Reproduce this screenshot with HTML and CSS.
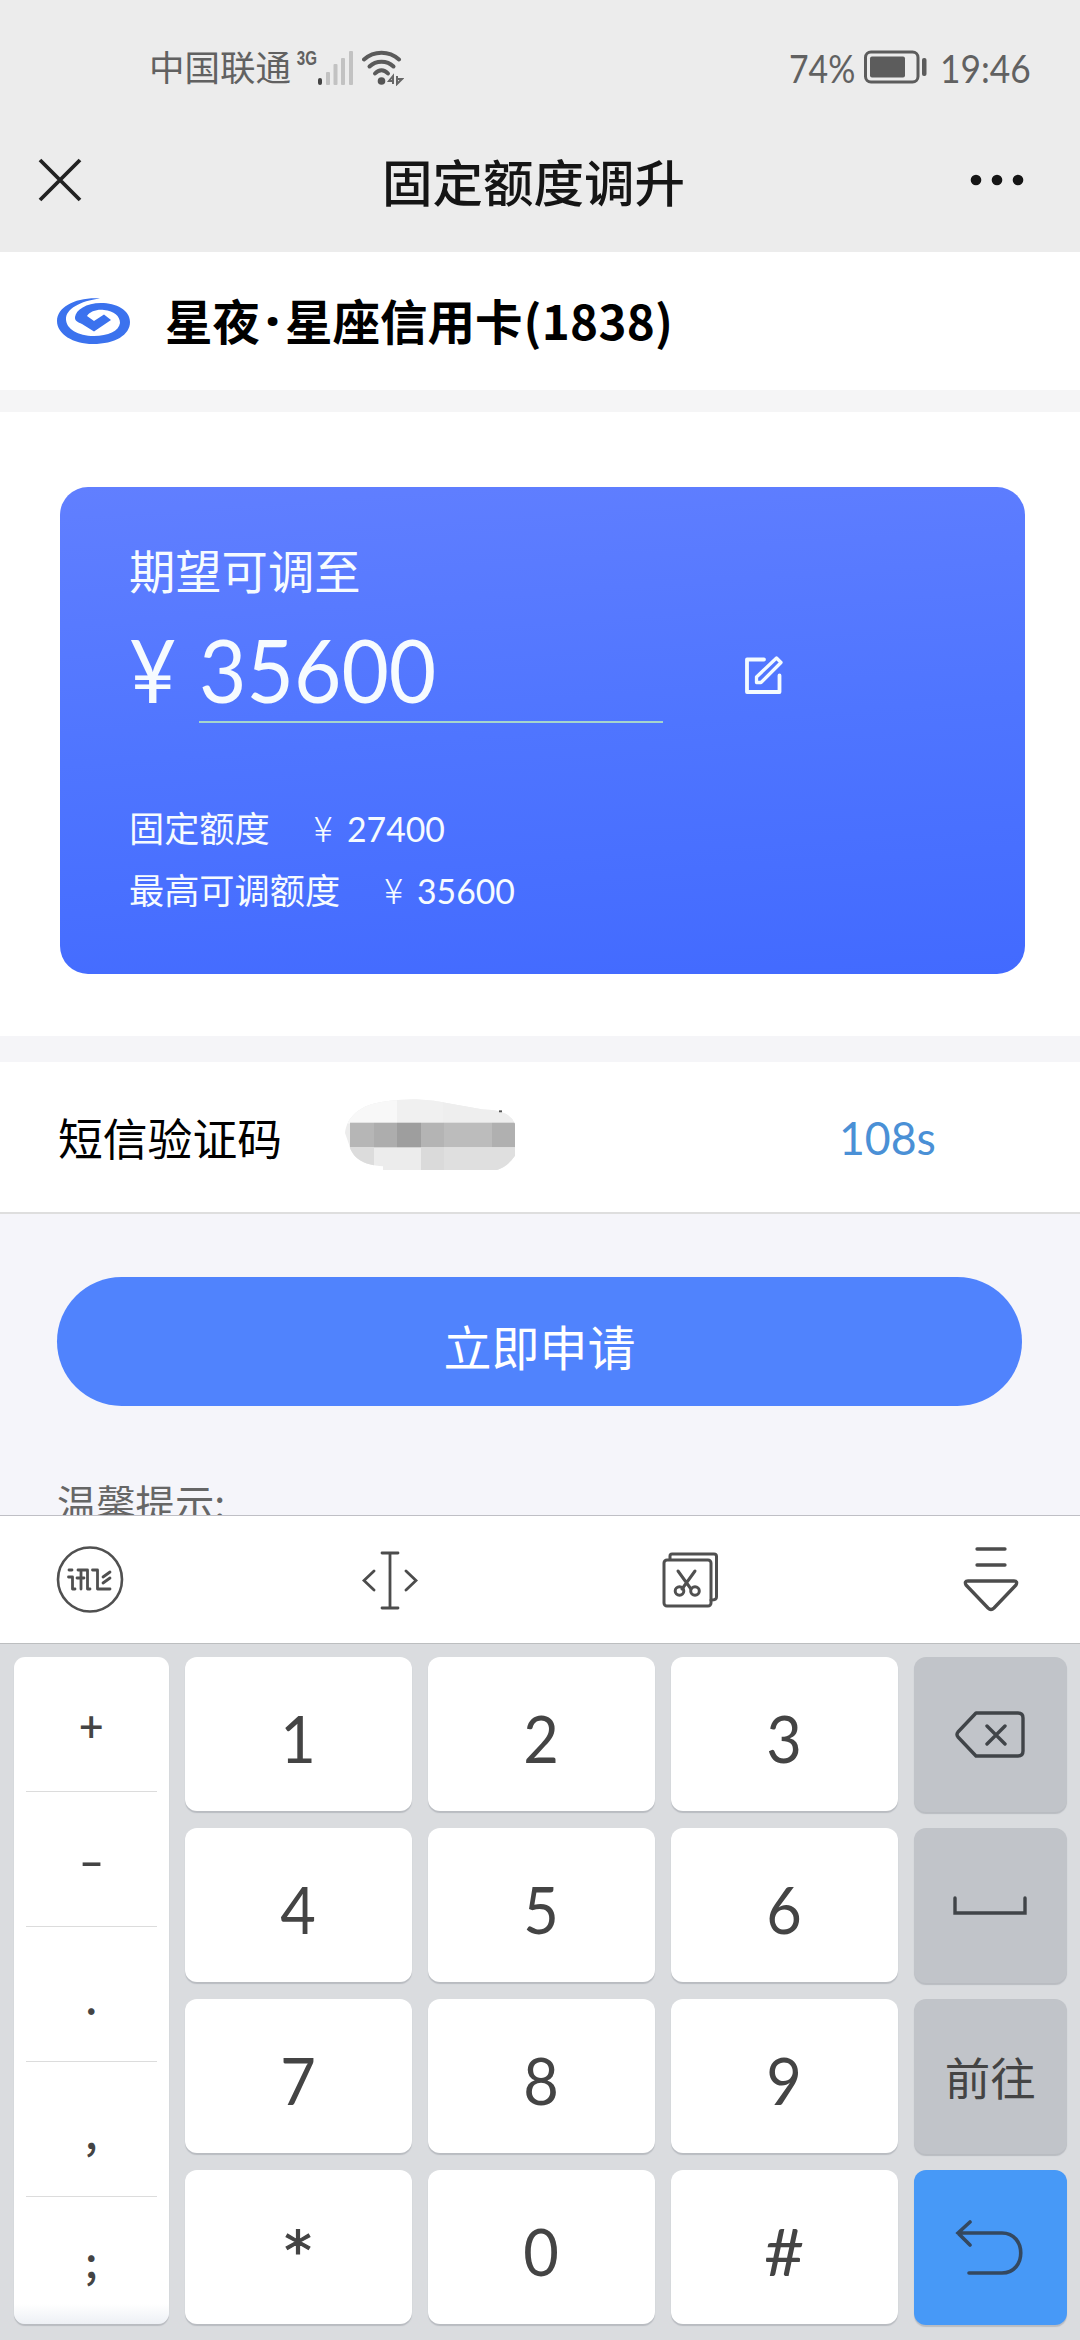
FILE: index.html
```html
<!DOCTYPE html>
<html lang="zh-CN">
<head>
<meta charset="utf-8">
<title>固定额度调升</title>
<link rel="stylesheet" href="styles.css">
</head>
<body>
<div class="screen">
  <header class="top">
    <div class="status">
      <span class="carrier">中国联通</span>
      <span class="net">3G</span>
      <svg class="signal" width="36" height="36" viewBox="0 0 36 36"><rect x="0" y="27" width="4" height="7" rx="2" fill="#444"/><g fill="#c2c2c2"><rect x="8" y="21" width="4" height="13" rx="1"/><rect x="15.500" y="13" width="4" height="21" rx="1"/><rect x="23" y="7" width="4" height="27" rx="1"/><rect x="31" y="0" width="4" height="34" rx="1"/></g></svg>
      <svg class="wifi" width="42" height="36" viewBox="0 0 42 36"><g fill="none" stroke="#5a5a5a" stroke-width="4" stroke-linecap="round"><path d="M2 9.500C12 0.500 27 0.500 37 9.500"/><path d="M7.500 16.500C14 10 25 10 31.500 16.500"/><path d="M13 23.500C17 19 22 19 26 23.500"/></g><circle cx="19.500" cy="31" r="3.800" fill="#555"/><path d="M31 34V26L27 31H32M35 26V34L40 29H34" stroke="#666" stroke-width="2" fill="none"/></svg>
      <span class="battery-text"><i class="num">74%</i></span>
      <svg class="battery" width="64" height="36" viewBox="0 0 64 36"><rect x="1.500" y="2" width="52.500" height="30" rx="5.500" fill="none" stroke="#5c5c5c" stroke-width="3"/><rect x="6" y="6.500" width="35" height="21" rx="2" fill="#5c5c5c"/><rect x="58" y="8" width="4.500" height="18" rx="2" fill="#5c5c5c"/></svg>
      <span class="clock"><i class="num">19:46</i></span>
    </div>
    <div class="nav">
      <svg class="close" width="44" height="44" viewBox="0 0 44 44"><path d="M2 2L42 42M42 2L2 42" stroke="#222" stroke-width="3.800"/></svg>
      <h1 class="title">固定额度调升</h1>
      <svg class="more" width="54" height="12" viewBox="0 0 54 12" fill="#151515"><circle cx="6" cy="6" r="5.300"/><circle cx="27" cy="6" r="5.300"/><circle cx="48" cy="6" r="5.300"/></svg>
    </div>
  </header>
  <section class="account">
    <svg class="bank" width="75" height="48" viewBox="0 0 75 48"><path d="M44 1.500C20 0 1 10 1 24C1 37 17 47 37 47C59 47 74 38 74 25C74 13 60 6 45 6C30 6 20 13 19 20C18.500 24 22 25 26 27L38 34.500L55 23L48 17.500L38 24L31 19C34 14 42 12 48 13C58 14 64 19 64 26C63 34 52 39 38 39C22 39 10 32 10 22C10 12 24 4 44 1.500Z" fill="#3b72ee"/></svg>
    <span class="account-name">星夜<b class="dot">·</b>星座信用卡<b class="tail">(1838)</b></span>
  </section>
  <section class="quota">
    <div class="card">
      <div class="card-label">期望可调至</div>
      <div class="amount">
        <span class="yen"><i class="num">¥</i></span>
        <span class="field"><i class="num">35600</i></span>
        <svg class="edit" width="40" height="40" viewBox="0 0 40 40" fill="none" stroke="#f4fbff" stroke-width="3.800" stroke-linejoin="round" stroke-linecap="round"><path d="M20 4.500H3V37H35.500V20.500"/><path d="M12.500 27.500V22L32.500 3L37 7.500L17 27.500Z" stroke-width="3.300"/></svg>
      </div>
      <div class="line first"><span>固定额度</span><i class="yen-small">¥</i><i class="num">27400</i></div>
      <div class="line"><span>最高可调额度</span><i class="yen-small">¥</i><i class="num">35600</i></div>
    </div>
  </section>
  <section class="sms">
    <span class="sms-label">短信验证码</span>
    <svg class="mosaic" width="172" height="72" viewBox="0 0 172 76" preserveAspectRatio="none"><defs><clipPath id="blob"><path d="M0 36C2 18 16 6 38 3C60-1 84 0 100 4L138 11Q164 11 170 26V60Q163 71 152 75H38V71C18 70 7 62 4 48Z"/></clipPath></defs><g clip-path="url(#blob)"><rect width="172" height="76" fill="#ececec"/><rect width="52" height="26" fill="#f8f8f8"/><rect x="52" width="46" height="26" fill="#f0f0f0"/><rect x="98" width="74" height="26" fill="#eeeeee"/><rect x="5" y="25" width="24" height="26" fill="#b6b6b6"/><rect x="29" y="25" width="23" height="26" fill="#adadad"/><rect x="52" y="25" width="24" height="26" fill="#9e9e9e"/><rect x="76" y="25" width="23" height="26" fill="#b4b4b4"/><rect x="99" y="25" width="48" height="26" fill="#bcbcbc"/><rect x="147" y="25" width="23" height="26" fill="#b0b0b0"/><rect x="5" y="51" width="24" height="25" fill="#dcdcdc"/><rect x="76" y="51" width="23" height="25" fill="#dadada"/><rect x="99" y="51" width="73" height="25" fill="#dfdfdf"/></g><rect x="154" y="12" width="3" height="2" fill="#555"/></svg>
    <span class="count"><i class="num">108s</i></span>
  </section>
  <section class="action">
    <button class="apply">立即申请</button>
    <p class="tips">温馨提示:</p>
  </section>
  <section class="keyboard">
    <div class="tools">
      <svg width="68" height="68" viewBox="0 0 68 68" fill="none" stroke="#505050" stroke-width="2.600"><circle cx="34" cy="33.500" r="32"/><g stroke-width="2.800" stroke-linecap="round" stroke-linejoin="round"><path d="M13 24H16M12.500 31H16.500V43H19M22 24H31.500V43H34M25 24V43M21 32H28M36.500 24H41.500V43H54M47 31L54 26M47 37L54 32"/></g></svg>
      <svg class="cursor" width="56" height="60" viewBox="0 0 56 60" fill="none" stroke="#4c4c4c" stroke-width="2.800" stroke-linecap="round"><path d="M20 3H36M20 58H36M28 3V58M12 21L2 30.500L12 40M44 21L54 30.500L44 40"/></svg>
      <svg class="clip" width="56" height="56" viewBox="0 0 56 56" fill="none" stroke="#505050" stroke-width="3" stroke-linecap="round"><rect x="2" y="8" width="47" height="46" rx="3"/><path d="M8 7V4Q8 2 10 2H52Q54.500 2 54.500 4.500V45Q54.500 48 49 48M16 19L29 37M33 19L20 37"/><circle cx="17.500" cy="39" r="4.300"/><circle cx="33" cy="39" r="4.300"/></svg>
      <svg width="56" height="68" viewBox="0 0 56 68" fill="none" stroke="#4c4c4c" stroke-width="3.300" stroke-linecap="round" stroke-linejoin="round"><path d="M14 3H42M14 19H42M5 35H51Q55 35 53 39L31 62Q28 65 25 62L3 39Q1 35 5 35Z"/></svg>
    </div>
    <div class="keys">
      <div class="symbols"><span class="plus">+</span><span class="minus"><i>-</i></span><span class="period">.</span><span class="comma">,</span><span class="semi">;</span></div>
      <div class="pad">
        <div class="key"><i class="num">1</i></div><div class="key"><i class="num">2</i></div><div class="key"><i class="num">3</i></div>
        <div class="key"><i class="num">4</i></div><div class="key"><i class="num">5</i></div><div class="key"><i class="num">6</i></div>
        <div class="key"><i class="num">7</i></div><div class="key"><i class="num">8</i></div><div class="key"><i class="num">9</i></div>
        <div class="key star">*</div><div class="key"><i class="num">0</i></div><div class="key hash"><i class="num">#</i></div>
      </div>
      <div class="side">
        <div class="fn"><svg width="72" height="48" viewBox="0 0 72 48" fill="none" stroke="#404448" stroke-width="3.400" stroke-linecap="round" stroke-linejoin="round"><path d="M22 2H64Q69 2 69 7V40Q69 45 64 45H22L4 26Q2 23.500 4 21ZM33 15L51 33M51 15L33 33"/></svg></div>
        <div class="fn"><svg width="74" height="20" viewBox="0 0 74 20" fill="none" stroke="#404448" stroke-width="3.400" stroke-linecap="round"><path d="M2 2V17H72V2"/></svg></div>
        <div class="fn go">前往</div>
        <div class="fn enter"><svg width="70" height="56" viewBox="0 0 70 56" fill="none" stroke="#34485f" stroke-width="3.600" stroke-linecap="round"><path d="M15 2L3 13L15 25M3 13H47C72 13 72 53 47 53H14"/></svg></div>
      </div>
    </div>
  </section>
</div>
</body>
</html>
```

FILE: styles.css
```css
* { box-sizing: border-box; }
body { margin: 0; font-family: "Noto Sans CJK SC", sans-serif; }
svg { display: block; flex: none; }
i { font-style: normal; }
.screen { width: 1080px; height: 2340px; overflow: hidden; display: flex; flex-direction: column; background: #fff; }
.num { display: inline-block; font-family: Lato, "Noto Sans CJK SC", sans-serif; transform: scaleX(.93); transform-origin: left center; white-space: nowrap; }

.top { height: 252px; flex: none; background: #ececec; }
.status { height: 100px; padding: 47px 49px 0 149px; display: flex; align-items: flex-start; color: #616161; }
.carrier { font-size: 35.500px; line-height: 37px; }
.net { width: 27px; padding-left: 8px; margin-top: 1px; font: bold 21px/19px "Liberation Sans", sans-serif; transform: scaleX(.72); transform-origin: left; }
.signal { margin-top: 4px; }
.wifi { margin: 3px 0 0 8px; }
.battery { margin-top: 3px; }
.battery-text { width: 75px; margin-left: auto; }
.battery-text, .clock { font-size: 38px; line-height: 39px; }
.battery-text .num { transform: scaleX(.89); }
.clock { width: 91px; margin-left: 12px; }
.nav { display: flex; align-items: center; justify-content: space-between; height: 160px; padding: 0 56px 0 38px; }
.title { margin: 0 0 0 15px; font-size: 50.500px; line-height: 60px; font-weight: 500; color: #151515; }

.account { height: 138px; flex: none; display: flex; align-items: center; gap: 34px; padding: 0 56px; }
.account-name { margin-top: -3px; display: flex; font-size: 47.500px; font-weight: 700; line-height: 60px; color: #000; }
.dot { width: 25px; text-align: center; font-family: "Noto Sans", sans-serif; }
.tail { margin-left: 1px; font-weight: 700; letter-spacing: .3px; }

.quota { height: 672px; flex: none; border-top: 22px solid #f5f5f6; border-bottom: 26px solid #f5f5f8; padding: 75px 55px 0 60px; }
.card { height: 487px; border-radius: 28px; background: linear-gradient(176deg, #617fff, #4f75ff 50%, #426aff); color: #f6fbff; padding: 50px 67px 0 69px; }
.card-label { font-size: 46.300px; line-height: 64px; }
.amount { display: flex; height: 122px; align-items: flex-start; }
.yen { width: 70px; font-size: 88px; line-height: 127px; }
.field { width: 464px; height: 122px; border-bottom: 2px solid #a5d5cc; font-size: 88px; line-height: 127px; }
.edit { margin: 54px 0 0 81px; }
.line { display: flex; align-items: center; height: 62px; font-size: 35.200px; line-height: 62px; }
.line .num { margin-top: 1px; transform: scaleX(.96); }
.line.first { margin-top: 73px; }
.yen-small { font-weight: 300; margin-left: 44px; width: 33px; }

.sms { height: 152px; flex: none; display: flex; align-items: center; padding-left: 58px; border-bottom: 2px solid #dedede; }
.sms-label { width: 287px; margin-top: -2px; font-size: 44.800px; color: #000; }
.mosaic { margin-top: -5px; }
.count { margin: -4px 0 0 322px; font-size: 45.500px; color: #4a90d6; }
.count .num { transform: scaleX(.98); }
.action { height: 301px; flex: none; overflow: hidden; background: #f5f5fa; padding: 63px 58px 0 57px; }
.apply { display: block; width: 965px; height: 129px; border: 0; border-radius: 65px; background: #5083fd; color: #fff; font: 48px "Noto Sans CJK SC", sans-serif; padding: 6px 0 0; }
.tips { margin: 67px 0 0; font-size: 39.300px; line-height: 58px; color: #666; }

.keyboard { flex: 1; background: #dadcdf; border-top: 1px solid #bfbfc5; }
.tools { display: flex; align-items: center; justify-content: space-between; height: 128px; padding: 0 61px 0 56px; background: #fff; border-bottom: 1px solid #bcbec0; }
.cursor { margin-left: -7px; }
.keys { display: flex; gap: 16px; padding: 13px 13px 0 14px; color: #444; }
.symbols { width: 155px; height: 667px; display: grid; grid-template-rows: repeat(4, 135px) 127px; border-radius: 11px; background: linear-gradient(#fff 97%, #edf0f5); box-shadow: 0 2px 1px #b9bcc1; padding: 0 12px; }
.symbols span { text-align: center; font-size: 42px; line-height: 134px; border-bottom: 1px solid #dcdcdc; font-weight: 500; }
.symbols .plus { line-height: 135px; }
.symbols .minus { line-height: 131px; }
.symbols .period, .symbols .comma { line-height: 137px; }
.symbols .semi { border: 0; line-height: 126px; }
.minus i { display: inline-block; transform: scaleX(1.600); }
.pad { flex: 1; display: grid; grid-template-columns: repeat(3, 227px); grid-auto-rows: 154px; gap: 17px 16px; }
.key, .fn { display: flex; align-items: center; justify-content: center; border-radius: 12px; box-shadow: 0 2px 1px #b9bcc1; }
.key { background: #fff; font-size: 66px; padding-top: 6px; }
.key .num { transform-origin: center; }
.star { font: 54px "DejaVu Sans", sans-serif; padding-top: 6px; -webkit-text-stroke: 1.200px #444; }
.hash .num { transform: scaleX(1.050); }
.side { width: 154px; display: grid; grid-auto-rows: 155px; gap: 16px; }
.fn { background: #c1c4c9; font-size: 45.500px; }
.go { padding-bottom: 2px; }
.enter { background: #4799f7; }
```
